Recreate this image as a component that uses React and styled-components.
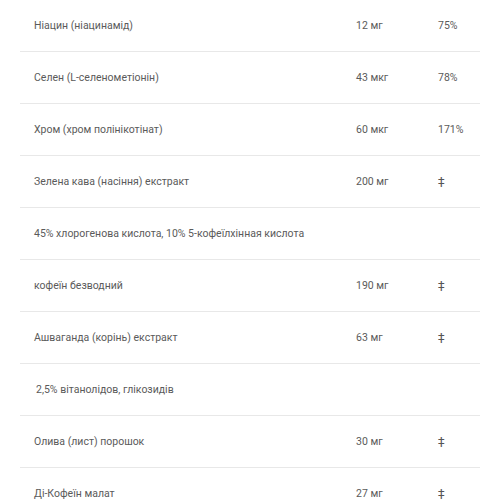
import React from 'react';
import styled, { createGlobalStyle } from 'styled-components';

const GlobalStyle = createGlobalStyle`
  html, body {
    margin: 0;
    padding: 0;
    background: #fff;
  }
`;

const Table = styled.div`
  margin: 0 20px;
  width: 460px;
  font-family: Roboto, "Noto Sans", sans-serif;
  font-size: 10.5px;
  color: #5a5a5a;
`;

const Row = styled.div`
  display: grid;
  grid-template-columns: 322px 82px 1fr;
  align-items: center;
  height: 51px;
  padding-left: ${p => (p.$indent ? 16 : 14)}px;
  border-bottom: 1px solid #e8e8e8;
`;

const Cell = styled.span`
  white-space: nowrap;
`;

const Mark = styled.span`
  font-family: "DejaVu Sans", sans-serif;
  font-size: 13px;
  color: #555;
`;

const rows = [
  { name: 'Ніацин (ніацинамід)', amount: '12 мг', dv: '75%' },
  { name: 'Селен (L-селенометіонін)', amount: '43 мкг', dv: '78%' },
  { name: 'Хром (хром полінікотінат)', amount: '60 мкг', dv: '171%' },
  { name: 'Зелена кава (насіння) екстракт', amount: '200 мг', dv: '‡' },
  { name: '45% хлорогенова кислота, 10% 5-кофеїлхінная кислота' },
  { name: 'кофеїн безводний', amount: '190 мг', dv: '‡' },
  { name: 'Ашваганда (корінь) екстракт', amount: '63 мг', dv: '‡' },
  { name: '2,5% вітанолідов, глікозидів', indent: true },
  { name: 'Олива (лист) порошок', amount: '30 мг', dv: '‡' },
  { name: 'Ді-Кофеїн малат', amount: '27 мг', dv: '‡' },
];

export default function App() {
  return (
    <>
      <GlobalStyle />
      <Table>
        {rows.map((r, i) => (
          <Row key={i} $indent={r.indent}>
            <Cell>{r.name}</Cell>
            <Cell>{r.amount}</Cell>
            {r.dv === '‡' ? <Mark>‡</Mark> : <Cell>{r.dv}</Cell>}
          </Row>
        ))}
      </Table>
    </>
  );
}
